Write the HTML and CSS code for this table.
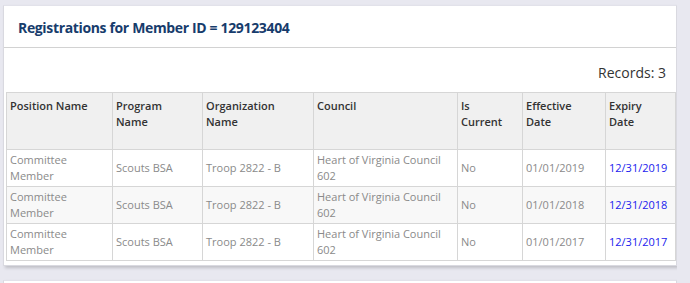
FILE: index.html
```html
<!DOCTYPE html>
<html>
<head>
<meta charset="utf-8">
<link rel="stylesheet" href="styles.css">
</head>
<body>
<div class="panel">
  <div class="panel-heading">
    <h3 class="panel-title">Registrations for Member ID = 129123404</h3>
  </div>
  <div class="panel-body">
    <div class="records">Records: 3</div>
    <table class="grid">
      <colgroup>
        <col style="width:106px">
        <col style="width:90px">
        <col style="width:111px">
        <col style="width:144px">
        <col style="width:65px">
        <col style="width:83px">
        <col style="width:70px">
      </colgroup>
      <thead>
        <tr>
          <th>Position Name</th>
          <th>Program Name</th>
          <th>Organization Name</th>
          <th>Council</th>
          <th>Is Current</th>
          <th>Effective Date</th>
          <th>Expiry Date</th>
        </tr>
      </thead>
      <tbody>
        <tr>
          <td>Committee Member</td>
          <td>Scouts BSA</td>
          <td>Troop 2822 - B</td>
          <td>Heart of Virginia Council 602</td>
          <td>No</td>
          <td>01/01/2019</td>
          <td><a href="#">12/31/2019</a></td>
        </tr>
        <tr>
          <td>Committee Member</td>
          <td>Scouts BSA</td>
          <td>Troop 2822 - B</td>
          <td>Heart of Virginia Council 602</td>
          <td>No</td>
          <td>01/01/2018</td>
          <td><a href="#">12/31/2018</a></td>
        </tr>
        <tr>
          <td>Committee Member</td>
          <td>Scouts BSA</td>
          <td>Troop 2822 - B</td>
          <td>Heart of Virginia Council 602</td>
          <td>No</td>
          <td>01/01/2017</td>
          <td><a href="#">12/31/2017</a></td>
        </tr>
      </tbody>
    </table>
  </div>
</div>
<div class="panel panel-next"></div>
</body>
</html>
```

FILE: styles.css
```css
html, body {
  margin: 0;
  padding: 0;
}

body {
  background: #e8e8f0;
  font-family: "Open Sans", "Liberation Sans", sans-serif;
  padding: 5px 0 0 3px;
  width: 674px;
  overflow: hidden;
  height: 278px;
}

.panel {
  background: #fff;
  border: 1px solid #d9d9e0;
  border-top-color: #e2e2ea;
  box-shadow: 2px 2px 3px rgba(0, 0, 0, 0.18);
}

.panel-heading {
  height: 41px;
  border-bottom: 1px solid #d2d2d2;
  display: flex;
  align-items: center;
  padding-left: 14px;
}

.panel-title {
  margin: 0;
  font-size: 14px;
  font-weight: 700;
  color: #173c6c;
  padding-top: 2px;
  letter-spacing: -0.35px;
}

.panel-body {
  padding: 0 1px 4px 2px;
}

.records {
  text-align: right;
  font-size: 14px;
  color: #333;
  height: 44px;
  line-height: 20px;
  padding-top: 15px;
  box-sizing: border-box;
  padding-right: 9px;
}

.grid {
  border-collapse: collapse;
  table-layout: fixed;
  width: 670px;
  font-size: 11px;
  line-height: 16px;
}

.grid th, .grid td {
  border: 1px solid #d6d6d6;
  text-align: left;
  padding: 2px 3px;
}

.grid th {
  background: #f0f0f0;
  color: #333;
  font-weight: 600;
  vertical-align: top;
  height: 49px;
  padding: 5px 9px 2px 3px;
}

.grid td {
  color: #8a8a8a;
  vertical-align: middle;
  height: 32px;
}

.grid tbody tr:nth-child(2) td {
  background: #f8f8f8;
}

.grid a {
  color: #1a1aee;
  text-decoration: none;
}

.panel-next {
  margin-top: 14px;
  height: 20px;
}
```
